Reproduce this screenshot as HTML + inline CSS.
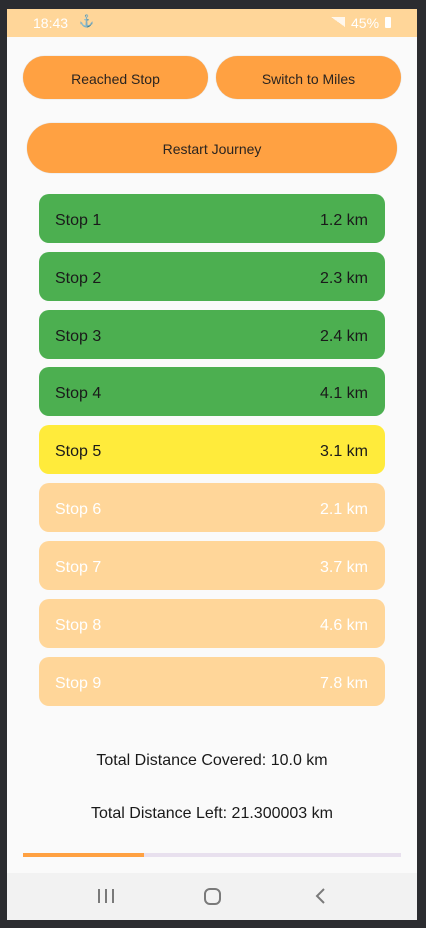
<!DOCTYPE html>
<html><head><meta charset="utf-8"><style>
*{margin:0;padding:0;box-sizing:border-box}
html,body{width:426px;height:928px;overflow:hidden;background:#2b2c30;font-family:"Liberation Sans",Roboto,sans-serif}
.scr{position:absolute;left:7px;top:9px;width:410px;height:911px;background:#fafafa}
.sb{position:absolute;left:0;top:0;width:410px;height:28px;background:#ffd699;color:#fff;font-size:14px}
.btn{position:absolute;background:#ffa142;border-radius:24px;color:#2a2420;font-size:14px;display:flex;align-items:center;justify-content:center;box-shadow:0 0 1px rgba(0,0,0,.25);padding-top:2px}
.stop{position:absolute;left:32px;width:346px;height:49px;border-radius:10px;display:flex;align-items:center;justify-content:space-between;padding:4px 17px 0 16px;font-size:16px;color:#1a1a1a}
.g{background:#4caf50}.y{background:#ffeb3b}.o{background:#ffd699;color:#fff}
.tot{position:absolute;left:0;width:410px;text-align:center;font-size:16px;color:#1a1a1a}
.nav{position:absolute;left:0;top:864px;width:410px;height:47px;background:#f2f2f2}
</style></head><body>
<div class="scr">
 <div class="sb"><span style="position:absolute;left:26px;top:6px">18:43</span>
  <span style="position:absolute;left:72px;top:5px;font-size:12px">&#9875;</span>
  <span style="position:absolute;left:324px;top:8px;width:14px;height:10px;background:linear-gradient(to top right,transparent 50%,rgba(255,255,255,.9) 50%);opacity:.9"></span>
  <span style="position:absolute;left:344px;top:6px">45%</span>
  <span style="position:absolute;left:378px;top:8px;width:6px;height:11px;background:#fff;border-radius:1px"></span>
 </div>
 <div class="btn" style="left:16px;top:47px;width:185px;height:43px">Reached Stop</div>
 <div class="btn" style="left:209px;top:47px;width:185px;height:43px">Switch to Miles</div>
 <div class="btn" style="left:20px;top:114px;width:370px;height:50px;border-radius:25px">Restart Journey</div>
 <div class="stop g" style="top:185px"><span>Stop 1</span><span>1.2 km</span></div>
 <div class="stop g" style="top:243px"><span>Stop 2</span><span>2.3 km</span></div>
 <div class="stop g" style="top:301px"><span>Stop 3</span><span>2.4 km</span></div>
 <div class="stop g" style="top:358px"><span>Stop 4</span><span>4.1 km</span></div>
 <div class="stop y" style="top:416px"><span>Stop 5</span><span>3.1 km</span></div>
 <div class="stop o" style="top:474px"><span>Stop 6</span><span>2.1 km</span></div>
 <div class="stop o" style="top:532px"><span>Stop 7</span><span>3.7 km</span></div>
 <div class="stop o" style="top:590px"><span>Stop 8</span><span>4.6 km</span></div>
 <div class="stop o" style="top:648px"><span>Stop 9</span><span>7.8 km</span></div>
 <div class="tot" style="top:743px">Total Distance Covered: 10.0 km</div>
 <div class="tot" style="top:796px">Total Distance Left: 21.300003 km</div>
 <div style="position:absolute;left:16px;top:844px;width:378px;height:4px;background:#e8e0ee"></div>
 <div style="position:absolute;left:16px;top:844px;width:121px;height:4px;background:#ffa142"></div>
 <div class="nav">
  <svg width="410" height="47" style="position:absolute;left:0;top:0">
   <g stroke="#7a7a7a" stroke-width="2" fill="none">
    <path d="M92 16v14M99 16v14M106 16v14"/>
    <rect x="198" y="16" width="15" height="15" rx="5"/>
    <path d="M317 16l-7 7 7 7"/>
   </g>
  </svg>
 </div>
</div>
</body></html>
